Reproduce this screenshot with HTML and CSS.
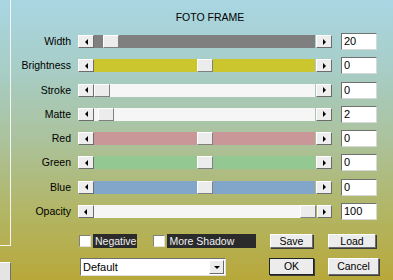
FILE: index.html
```html
<!DOCTYPE html>
<html lang="en">
  <head>
    <meta charset="UTF-8" />
    <title>Foto Frame</title>
    <link rel="stylesheet" href="styles.css">
  </head>
  <body>
    <div class="side">
      <div class="side-box"></div>
      <div class="side-btn"></div>
    </div>

    <div class="panel">
      <h1 class="title">FOTO FRAME</h1>

      <div class="rows">
        <div class="row">
          <label>Width</label>
          <div class="slider">
            <span class="arrow left"></span>
            <div class="track grey"><span class="thumb" style="margin-left: 9px"></span></div>
            <span class="arrow right"></span>
          </div>
          <div class="field">20</div>
        </div>
        <div class="row">
          <label>Brightness</label>
          <div class="slider">
            <span class="arrow left"></span>
            <div class="track yellow"><span class="thumb" style="margin-left: 103px"></span></div>
            <span class="arrow right"></span>
          </div>
          <div class="field">0</div>
        </div>
        <div class="row">
          <label>Stroke</label>
          <div class="slider">
            <span class="arrow left"></span>
            <div class="track white"><span class="thumb" style="margin-left: 0px"></span></div>
            <span class="arrow right"></span>
          </div>
          <div class="field">0</div>
        </div>
        <div class="row">
          <label>Matte</label>
          <div class="slider">
            <span class="arrow left"></span>
            <div class="track white"><span class="thumb" style="margin-left: 4px"></span></div>
            <span class="arrow right"></span>
          </div>
          <div class="field">2</div>
        </div>
        <div class="row">
          <label>Red</label>
          <div class="slider">
            <span class="arrow left"></span>
            <div class="track red"><span class="thumb" style="margin-left: 103px"></span></div>
            <span class="arrow right"></span>
          </div>
          <div class="field">0</div>
        </div>
        <div class="row">
          <label>Green</label>
          <div class="slider">
            <span class="arrow left"></span>
            <div class="track green"><span class="thumb" style="margin-left: 103px"></span></div>
            <span class="arrow right"></span>
          </div>
          <div class="field">0</div>
        </div>
        <div class="row">
          <label>Blue</label>
          <div class="slider">
            <span class="arrow left"></span>
            <div class="track blue"><span class="thumb" style="margin-left: 103px"></span></div>
            <span class="arrow right"></span>
          </div>
          <div class="field">0</div>
        </div>
        <div class="row">
          <label>Opacity</label>
          <div class="slider">
            <span class="arrow left"></span>
            <div class="track white"><span class="thumb" style="margin-left: 206px"></span></div>
            <span class="arrow right"></span>
          </div>
          <div class="field">100</div>
        </div>
      </div>

      <div class="bottom">
        <div class="checks">
          <div class="check"><span class="box"></span><span class="check-label">Negative</span></div>
          <div class="check"><span class="box"></span><span class="check-label">More Shadow</span></div>
        </div>
        <button class="btn save">Save</button>
        <button class="btn load">Load</button>

        <div class="select">
          <span class="select-text">Default</span>
          <span class="select-arrow"></span>
        </div>
        <button class="btn ok">OK</button>
        <button class="btn cancel">Cancel</button>
      </div>
    </div>
  </body>
</html>
```

FILE: styles.css
```css
body {
  margin: 0;
  width: 393px;
  height: 280px;
  overflow: hidden;
  font-family: "Liberation Sans", Arial, sans-serif;
  font-size: 10.5px;
  color: #000;
  display: grid;
  grid-template-columns: 11px 1fr;
  background: linear-gradient(
    to bottom,
    #a9d6e3 0%,
    #a7cdc6 25%,
    #abc29c 50%,
    #b2b666 75%,
    #b8a83a 100%
  );
}

.side {
  display: flex;
  flex-direction: column;
}

.side-box {
  height: 245px;
  border-right: 1px solid #f4f4f4;
  border-bottom: 1px solid #f4f4f4;
}

.side-btn {
  margin-top: 16px;
  height: 18px;
  background: #e4e4e4;
  border-top: 1px solid #fff;
  border-right: 1px solid #707070;
}

.panel {
  display: flex;
  flex-direction: column;
}

.title {
  margin: 0;
  height: 33px;
  padding: 10px 0 0 72px;
  box-sizing: border-box;
  width: 326px;
  text-align: center;
  font-size: 10.5px;
  font-weight: normal;
  line-height: 14px;
}

.rows {
  display: flex;
  flex-direction: column;
  gap: 7.3px;
}

.row {
  display: grid;
  grid-template-columns: 61px 260px 45px;
  height: 17px;
  align-items: center;
}

.row label {
  text-align: right;
  padding-right: 1px;
  line-height: 13px;
}

.slider {
  margin-left: 6px;
  display: flex;
  height: 13px;
  width: 254px;
}

.arrow {
  width: 16px;
  height: 13px;
  box-sizing: border-box;
  background: #eeeeee;
  border-top: 1px solid #fff;
  border-left: 1px solid #fff;
  border-right: 1px solid #6c6c6c;
  border-bottom: 1px solid #6c6c6c;
  display: flex;
  align-items: center;
  justify-content: center;
}

.arrow::before {
  content: "";
  border-top: 3px solid transparent;
  border-bottom: 3px solid transparent;
}

.arrow.left::before {
  border-right: 3px solid #000;
}

.arrow.right {
  margin-left: 1px;
}

.arrow.right::before {
  border-left: 3px solid #000;
}

.track {
  flex: 1;
  display: flex;
  height: 13px;
}

.track.grey { background: #7f7f7f; }
.track.yellow { background: #ccc62e; }
.track.white { background: #f6f6f6; }
.track.red { background: #c99797; }
.track.green { background: #93c893; }
.track.blue { background: #81a6c9; }

.thumb {
  width: 16px;
  height: 13px;
  box-sizing: border-box;
  background: #ececec;
  border-top: 1px solid #fff;
  border-left: 1px solid #fff;
  border-right: 1px solid #808080;
  border-bottom: 1px solid #808080;
}

.field {
  margin-left: 9px;
  width: 36px;
  height: 17px;
  box-sizing: border-box;
  background: #fff;
  border-top: 1px solid #707070;
  border-left: 1px solid #707070;
  border-right: 1px solid #d8d8d8;
  border-bottom: 1px solid #d8d8d8;
  padding-left: 2px;
  font-size: 11px;
  line-height: 15px;
}

.bottom {
  margin-top: 13px;
  margin-left: 68px;
  display: grid;
  grid-template-columns: 190px 59px 50px;
  grid-template-rows: 15px 19px;
  row-gap: 9px;
  align-items: center;
}

.checks {
  display: flex;
  gap: 16px;
  align-items: center;
}

.check {
  display: flex;
  align-items: center;
  gap: 2px;
}

.box {
  width: 12px;
  height: 12px;
  box-sizing: border-box;
  background: #fff;
  border-top: 1px solid #808080;
  border-left: 1px solid #808080;
  border-right: 1px solid #e0e0e0;
  border-bottom: 1px solid #e0e0e0;
}

.check-label {
  background: #2b2b2b;
  color: #f0f0f0;
  height: 14px;
  line-height: 14px;
  padding: 0 1px 0 2px;
}

.check:last-child .check-label {
  width: 86px;
}

.btn {
  font-family: "Liberation Sans", Arial, sans-serif;
  font-size: 10.5px;
  background: #ececec;
  color: #000;
  padding: 0;
  box-sizing: border-box;
  border-top: 1px solid #fff;
  border-left: 1px solid #fff;
  border-right: 1px solid #6a6a6a;
  border-bottom: 1px solid #6a6a6a;
  box-shadow: 1px 1px 0 #3c3c3c;
}

.save {
  width: 43px;
  height: 14px;
  margin-left: 1px;
  line-height: 12px;
}

.load {
  width: 48px;
  height: 14px;
  line-height: 12px;
}

.ok {
  width: 45px;
  height: 17px;
  outline: 1px solid #222;
  outline-offset: -1px;
  line-height: 15px;
}

.cancel {
  width: 51px;
  height: 17px;
  line-height: 15px;
}

.select {
  width: 146px;
  height: 18px;
  margin-left: 1px;
  box-sizing: border-box;
  background: #fff;
  border-top: 1px solid #707070;
  border-left: 1px solid #707070;
  border-right: 1px solid #e0e0e0;
  border-bottom: 1px solid #e0e0e0;
  display: flex;
  align-items: center;
  justify-content: space-between;
  align-self: end;
}

.select-text {
  padding-left: 2px;
  font-size: 11px;
}

.select-arrow {
  width: 15px;
  height: 14px;
  margin-right: 1px;
  box-sizing: border-box;
  background: #ececec;
  border-top: 1px solid #fff;
  border-left: 1px solid #fff;
  border-right: 1px solid #6a6a6a;
  border-bottom: 1px solid #6a6a6a;
  display: flex;
  align-items: center;
  justify-content: center;
}

.select-arrow::before {
  content: "";
  border-left: 3px solid transparent;
  border-right: 3px solid transparent;
  border-top: 3px solid #000;
}
```
